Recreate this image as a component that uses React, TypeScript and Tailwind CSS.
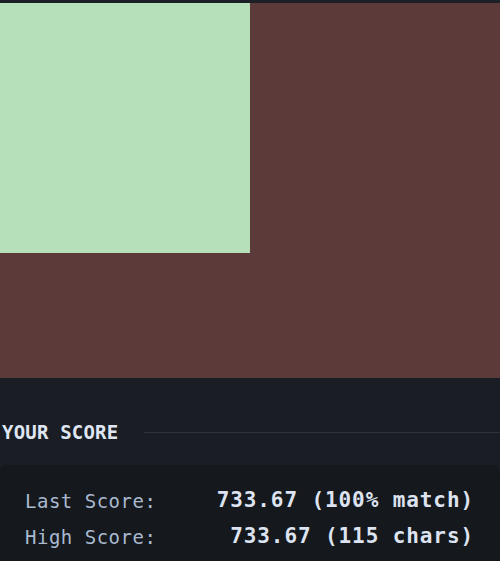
export default function App() {
  const mono = { fontFamily: '"DejaVu Sans Mono", "Liberation Mono", monospace' };
  return (
    <div className="h-[561px] w-[500px] overflow-hidden bg-[#1a1d24]" style={mono}>
      <div className="h-[3px] bg-[#1c1f25]" />
      {/* target canvas */}
      <div className="h-[375px] bg-[#5c3a3a]">
        <div className="h-[250px] w-[250px] bg-[#b5e0b9]" />
      </div>

      <div className="mt-[42px] flex items-center gap-[26px]">
        <h2 className="shrink-0 pl-[2px] text-[19px] font-bold leading-[24px] tracking-[0.2px] text-[#dfe6f2]">
          YOUR SCORE
        </h2>
        <div className="h-px flex-1 bg-[#2e333c]" />
      </div>

      <div className="mt-[21px] h-[120px] rounded-[8px] bg-[#15181d] pl-[25px] pr-[26px] pt-[18px]">
        <div className="flex h-[36px] items-center justify-between">
          <span className="text-[19px] tracking-[0.5px] text-[#a9bad0]">Last Score:</span>
          <span className="text-[21px] font-bold tracking-[0.9px] text-[#dde3f0]">733.67 (100% match)</span>
        </div>
        <div className="flex h-[36px] items-center justify-between">
          <span className="text-[19px] tracking-[0.5px] text-[#a9bad0]">High Score:</span>
          <span className="text-[21px] font-bold tracking-[0.9px] text-[#dde3f0]">733.67 (115 chars)</span>
        </div>
      </div>
    </div>
  );
}
